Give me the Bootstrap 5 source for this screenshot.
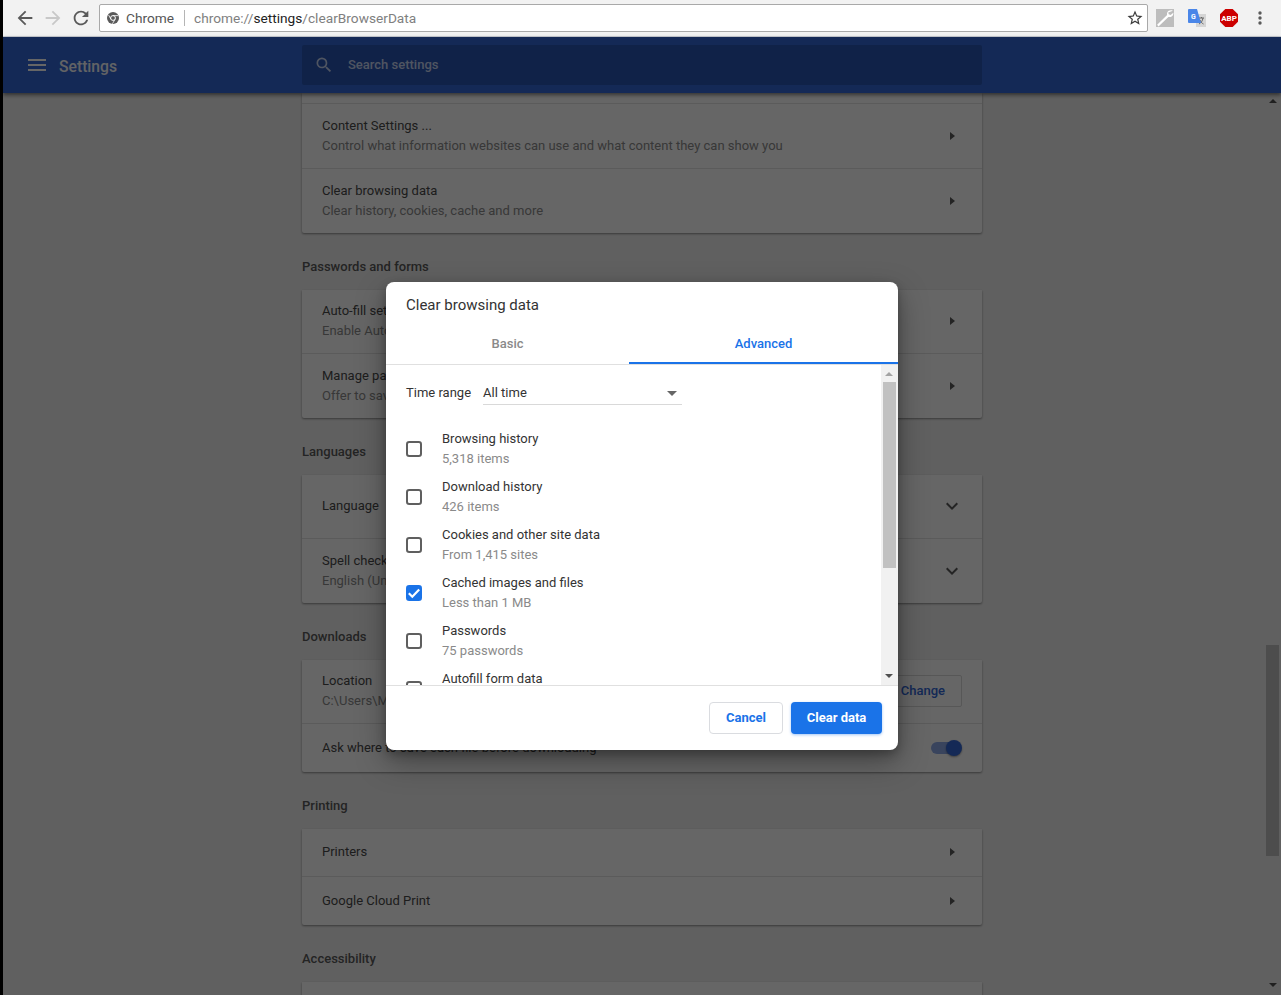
<!DOCTYPE html>
<html lang="en">
<head>
    <meta charset="UTF-8">
    <meta name="viewport" content="width=device-width, initial-scale=1.0">
    <title>Settings - Clear browsing data</title>
    <link href="https://cdn.jsdelivr.net/npm/bootstrap@5.3.0/dist/css/bootstrap.min.css" rel="stylesheet">
    <style>
        html, body { height: 995px; overflow: hidden; }
        body { position: relative; background: #000; font-family: Roboto, "Liberation Sans", sans-serif; font-size: 13px; color: #333; padding-left: 3px; }

        /* browser chrome */
        .browser-bar { height: 37px; background: #f2f2f2; border-bottom: 1px solid #c9cdd3; }
        .tool-btn { width: 22px; height: 22px; fill: #5a5a5a; flex: none; margin-right: 6px; }
        .omnibox { width: 1049px; height: 28px; background: #fff; border: 1px solid #a9a9a9; border-radius: 2px; margin-left: 1px; padding: 0 3px 0 7px; font-size: 13.7px; color: #808080; }
        .omni-site { color: #555; border-right: 1px solid #b5b5b5; height: 16px; line-height: 16px; padding-right: 9px; margin-right: 9px; width: 59px; }
        .omni-host { color: #222; }
        .ext-icon { width: 18px; height: 18px; flex: none; }

        /* settings page under the scrim */
        .settings-head { height: 56px; background: #3367d6; padding-left: 25px; box-shadow: 0 2px 4px rgba(0,0,0,.5); position: relative; z-index: 1; }
        .settings-title { color: #fff; font-size: 15.7px; font-weight: 500; margin-left: 13px; width: 243px; opacity: .95; padding-top: 4px; }
        .search-box { width: 680px; height: 40px; background: #2a56b5; border-radius: 2px; color: #c6d4f2; font-weight: 500; padding-left: 12px; }
        .search-box svg { width: 20px; height: 20px; fill: #c6d4f2; margin-right: 14px; }
        .settings-main { height: 902px; background: #f1f1f1; padding-left: 299px; overflow: hidden; position: relative; }
        .sect-title { font-weight: 500; color: #5a5a5a; height: 57px; padding-top: 26px; line-height: 16px; }
        .set-card { width: 680px; border: 0; border-radius: 0 0 2px 2px; box-shadow: 0 1px 2px rgba(0,0,0,.3), 0 1px 3px rgba(0,0,0,.15); }
        .set-row { height: 64px; padding: 0 20px; border-color: #e4e4e4; background: #fff; color: #4a4a4a; line-height: 20px; }
        .set-row:not(:last-child) { padding-bottom: 1px; }
        .set-row.row-h48 { height: 48px; }
        .set-row.row-h65 { height: 65px; padding-bottom: 0; }
        .set-row.set-stub { height: 11px; padding: 0; }
        .set-sub { color: #8c8c8c; }
        .set-arrow { width: 0; height: 0; border-left: 5px solid #5a5a5a; border-top: 4px solid transparent; border-bottom: 4px solid transparent; margin-right: 7px; }
        .set-chev { width: 24px; height: 24px; fill: #5a5a5a; margin-right: -2px; }
        .btn-change { border: 1px solid #d9d9d9; color: #3367d6; font-size: 13px; font-weight: 500; background: #fff; padding: 5px 16px 7px; height: 32px; border-radius: 2px; }
        .set-track { width: 26px; height: 12px; border-radius: 6px; background: #8eaae8; position: relative; margin-right: 5px; }
        .set-knob { position: absolute; right: -5px; top: -2px; width: 16px; height: 16px; border-radius: 50%; background: #3367d6; box-shadow: 0 1px 2px rgba(0,0,0,.4); }

        .page-bar { position: absolute; right: 0; top: 0; width: 16px; height: 100%; background: #f1f1f1; }
        .page-thumb { position: absolute; left: 1px; top: 552px; width: 13px; height: 211px; background: #c1c1c1; }
        .tri-up, .tri-down { position: absolute; left: 4px; width: 0; height: 0; border-left: 4px solid transparent; border-right: 4px solid transparent; }
        .tri-up { border-bottom: 4px solid #505050; }
        .tri-down { border-top: 4px solid #505050; }

        .scrim { position: absolute; left: 3px; right: 0; top: 37px; bottom: 0; background: rgba(0,0,0,.6); z-index: 5; }

        /* dialog */
        .clear-dialog { position: absolute; left: 386px; top: 282px; width: 512px; height: 468px; background: #fff; border-radius: 8px; box-shadow: 0 12px 30px rgba(0,0,0,.35), 0 4px 10px rgba(0,0,0,.25); z-index: 6; display: flex; flex-direction: column; overflow: hidden; }
        .dlg-title { font-size: 15px; color: #333; padding: 14px 20px 0; height: 47px; line-height: 18px; }
        .dlg-tabs { height: 36px; border-bottom: 1px solid #e0e0e0; flex-wrap: nowrap; }
        .dlg-tab { font-weight: 500; color: #8a8a8a; display: flex; align-items: center; justify-content: center; height: 35px; padding: 0 0 6px; }
        .dlg-tab.tab-basic { width: 243px; }
        .dlg-tab.tab-adv { width: 269px; color: #1a73e8; border-bottom: 2px solid #1a73e8; padding-bottom: 4px; }
        .dlg-body { height: 320px; position: relative; overflow: hidden; padding: 0 20px; }
        .dlg-range { height: 60px; padding-bottom: 4px; }
        .dlg-label { margin-right: 12px; }
        .dlg-select { width: 199px; height: 24px; border-bottom: 1px solid #d9d9d9; margin-bottom: 1px; padding: 2px 5px 0 0; }
        .dlg-caret { width: 0; height: 0; border-left: 5px solid transparent; border-right: 5px solid transparent; border-top: 5px solid #666; }
        .dlg-item { height: 48px; line-height: 20px; }
        .dlg-check { width: 16px; height: 16px; margin: 0 20px 0 0; flex: none; border: 2px solid #5f5f5f; border-radius: 2px; }
        .dlg-check:checked { background-color: #1a73e8; border: 0; background-size: 16px; background-image: url("data:image/svg+xml,%3csvg xmlns='http://www.w3.org/2000/svg' viewBox='0 0 16 16'%3e%3cpath fill='none' stroke='%23fff' stroke-width='2.2' d='M2.8 8.200 6.300 11.700 13.200 4.500'/%3e%3c/svg%3e"); }
        .dlg-sub { color: #8a8a8a; }
        .dlg-bar { position: absolute; right: 0; top: 0; width: 17px; height: 100%; background: #f1f1f1; }
        .dlg-thumb { position: absolute; left: 2px; top: 17px; width: 13px; height: 186px; background: #c1c1c1; }
        .dlg-foot { height: 65px; border-top: 1px solid #e0e0e0; padding: 16px; margin-top: auto; }
        .btn-cancel { width: 74px; height: 32px; padding: 0; font-size: 13px; font-weight: 700; color: #1a73e8; background: #fff; border: 1px solid #dadce0; border-radius: 4px; margin-right: 8px; }
        .btn-clear { width: 91px; height: 32px; padding: 0; font-size: 13px; font-weight: 700; color: #fff; background: #1a73e8; border: 0; border-radius: 4px; box-shadow: 0 1px 3px rgba(26,115,232,.4); }
    </style>
</head>
<body>

    <div class="browser-bar d-flex align-items-center">
        <svg class="tool-btn" style="margin-left:11px" viewBox="0 0 24 24"><path d="M20 11H7.830l5.590-5.590L12 4l-8 8 8 8 1.410-1.410L7.830 13H20v-2z"/></svg>
        <svg class="tool-btn" style="fill:#c8c8c8" viewBox="0 0 24 24"><path d="M4 11h12.170l-5.590-5.590L12 4l8 8-8 8-1.410-1.410L16.170 13H4v-2z"/></svg>
        <svg class="tool-btn" viewBox="0 0 24 24"><path d="M17.650 6.350A7.958 7.958 0 0 0 12 4c-4.420 0-7.990 3.580-7.990 8s3.570 8 7.990 8c3.730 0 6.840-2.550 7.730-6h-2.080A5.990 5.990 0 0 1 12 18c-3.310 0-6-2.690-6-6s2.690-6 6-6c1.660 0 3.140.69 4.220 1.780L13 11h7V4l-2.350 2.350z"/></svg>
        <div class="omnibox d-flex align-items-center">
            <svg width="12" height="12" viewBox="0 0 12 12" class="flex-shrink-0" style="margin-right:7px"><circle cx="6" cy="6" r="6" fill="#5a5a5a"/><circle cx="6" cy="6" r="2.400" fill="#5a5a5a" stroke="#fff" stroke-width="1"/><path d="M6 3.600h5M4 7.400 1.600 3M8 7.400 5.400 11.800" stroke="#fff" stroke-width=".8"/></svg>
            <span class="omni-site">Chrome</span>
            <span>chrome://<span class="omni-host">settings</span>/clearBrowserData</span>
            <svg class="ms-auto flex-shrink-0" width="18" height="18" viewBox="0 0 24 24" fill="#3c3c3c"><path d="M22 9.240l-7.190-.62L12 2 9.190 8.630 2 9.240l5.460 4.730L5.820 21 12 17.270 18.180 21l-1.630-7.030L22 9.240zM12 15.400l-3.760 2.270 1-4.280-3.320-2.880 4.380-.38L12 6.100l1.710 4.040 4.380.38-3.320 2.880 1 4.280L12 15.400z"/></svg>
        </div>
        <svg class="ext-icon" style="margin-left:8px" viewBox="0 0 16 16"><rect width="16" height="16" fill="#bdbdbd"/><path d="M15 1.500c-2-.9-4.300-.2-5 1.700-.3.8-.3 1.500-.1 2.200L1 14l1.200 1.500L11 7c1.800.5 3.600-.4 4.200-2 .2-.6.3-1.200.2-1.700L13 5.300 11.300 4.700 10.900 3z" fill="#fff"/></svg>
        <svg class="ext-icon" style="margin-left:14px" viewBox="0 0 18 18"><rect x="8" y="5" width="10" height="13" fill="#d5d5d5"/><path d="M11 9h5M13.500 8v1M15 9c-.5 3-2 5-4 6M12 11c.8 2 2 3.300 3.500 4" stroke="#666" stroke-width="1" fill="none"/><path d="M1 0h8l4 14H1a1 1 0 0 1-1-1V1a1 1 0 0 1 1-1z" fill="#4a86e8"/><text x="3" y="10" font-size="7" font-weight="700" fill="#fff" font-family="Roboto, sans-serif">G</text></svg>
        <svg class="ext-icon" style="margin-left:14px" viewBox="0 0 18 18"><path d="M5.300 0h7.400L18 5.300v7.400L12.700 18H5.300L0 12.700V5.300z" fill="#c00"/><text x="9" y="12" text-anchor="middle" font-size="8" font-weight="700" fill="#fff" font-family="Roboto, sans-serif">ABP</text></svg>
        <svg class="ext-icon" style="margin-left:13px" viewBox="0 0 18 18" fill="#5a5a5a"><circle cx="9" cy="4" r="1.700"/><circle cx="9" cy="9" r="1.700"/><circle cx="9" cy="14" r="1.700"/></svg>
    </div>

    <div class="settings-head d-flex align-items-center">
        <svg width="18" height="18" viewBox="0 0 18 18" fill="#fff"><rect y="3" width="18" height="2"/><rect y="8" width="18" height="2"/><rect y="13" width="18" height="2"/></svg>
        <div class="settings-title">Settings</div>
        <div class="search-box d-flex align-items-center">
            <svg viewBox="0 0 24 24"><path d="M15.500 14h-.79l-.28-.27A6.471 6.471 0 0 0 16 9.500 6.500 6.500 0 1 0 9.500 16c1.610 0 3.090-.59 4.230-1.570l.27.28v.79l5 4.990L20.490 19l-4.990-5zm-6 0C7.010 14 5 11.990 5 9.500S7.010 5 9.500 5 14 7.010 14 9.500 11.990 14 9.500 14z"/></svg>
            <span>Search settings</span>
        </div>
    </div>

    <div class="settings-main">
        <div class="card set-card">
            <div class="list-group list-group-flush">
                <div class="list-group-item set-row set-stub"></div>
                <div class="list-group-item set-row row-h65 d-flex align-items-center justify-content-between">
                    <div><div>Content Settings ...</div><div class="set-sub">Control what information websites can use and what content they can show you</div></div>
                    <span class="set-arrow"></span>
                </div>
                <div class="list-group-item set-row d-flex align-items-center justify-content-between">
                    <div><div>Clear browsing data</div><div class="set-sub">Clear history, cookies, cache and more</div></div>
                    <span class="set-arrow"></span>
                </div>
            </div>
        </div>

        <div class="sect-title">Passwords and forms</div>
        <div class="card set-card">
            <div class="list-group list-group-flush">
                <div class="list-group-item set-row d-flex align-items-center justify-content-between">
                    <div><div>Auto-fill settings</div><div class="set-sub">Enable Auto-fill to fill out web forms in a single click</div></div>
                    <span class="set-arrow"></span>
                </div>
                <div class="list-group-item set-row d-flex align-items-center justify-content-between">
                    <div><div>Manage passwords</div><div class="set-sub">Offer to save your web passwords</div></div>
                    <span class="set-arrow"></span>
                </div>
            </div>
        </div>

        <div class="sect-title">Languages</div>
        <div class="card set-card">
            <div class="list-group list-group-flush">
                <div class="list-group-item set-row d-flex align-items-center justify-content-between">
                    <div>Language</div>
                    <svg class="set-chev" viewBox="0 0 24 24"><path d="M16.590 8.590L12 13.170 7.410 8.590 6 10l6 6 6-6z"/></svg>
                </div>
                <div class="list-group-item set-row d-flex align-items-center justify-content-between">
                    <div><div>Spell check</div><div class="set-sub">English (United States)</div></div>
                    <svg class="set-chev" viewBox="0 0 24 24"><path d="M16.590 8.590L12 13.170 7.410 8.590 6 10l6 6 6-6z"/></svg>
                </div>
            </div>
        </div>

        <div class="sect-title">Downloads</div>
        <div class="card set-card">
            <div class="list-group list-group-flush">
                <div class="list-group-item set-row d-flex align-items-center justify-content-between">
                    <div><div>Location</div><div class="set-sub">C:\Users\Me\Downloads</div></div>
                    <button class="btn btn-change">Change</button>
                </div>
                <div class="list-group-item set-row row-h48 d-flex align-items-center justify-content-between">
                    <div>Ask where to save each file before downloading</div>
                    <span class="set-track"><span class="set-knob"></span></span>
                </div>
            </div>
        </div>

        <div class="sect-title">Printing</div>
        <div class="card set-card">
            <div class="list-group list-group-flush">
                <div class="list-group-item set-row row-h48 d-flex align-items-center justify-content-between">
                    <div>Printers</div>
                    <span class="set-arrow"></span>
                </div>
                <div class="list-group-item set-row row-h48 d-flex align-items-center justify-content-between">
                    <div>Google Cloud Print</div>
                    <span class="set-arrow"></span>
                </div>
            </div>
        </div>

        <div class="sect-title">Accessibility</div>
        <div class="card set-card">
            <div class="list-group list-group-flush">
                <div class="list-group-item set-row"></div>
            </div>
        </div>

        <div class="page-bar">
            <span class="tri-up" style="top:6px"></span>
            <div class="page-thumb"></div>
            <span class="tri-down" style="top:890px"></span>
        </div>
    </div>

    <div class="scrim"></div>

    <div class="clear-dialog">
        <div class="dlg-title">Clear browsing data</div>
        <div class="nav dlg-tabs">
            <div class="dlg-tab tab-basic">Basic</div>
            <div class="dlg-tab tab-adv">Advanced</div>
        </div>
        <div class="dlg-body">
            <div class="dlg-range d-flex align-items-center">
                <span class="dlg-label">Time range</span>
                <div class="dlg-select d-flex align-items-center justify-content-between">
                    <span>All time</span><span class="dlg-caret"></span>
                </div>
            </div>
            <label class="dlg-item d-flex align-items-center">
                <input class="form-check-input dlg-check" type="checkbox">
                <span><span class="d-block">Browsing history</span><span class="d-block dlg-sub">5,318 items</span></span>
            </label>
            <label class="dlg-item d-flex align-items-center">
                <input class="form-check-input dlg-check" type="checkbox">
                <span><span class="d-block">Download history</span><span class="d-block dlg-sub">426 items</span></span>
            </label>
            <label class="dlg-item d-flex align-items-center">
                <input class="form-check-input dlg-check" type="checkbox">
                <span><span class="d-block">Cookies and other site data</span><span class="d-block dlg-sub">From 1,415 sites</span></span>
            </label>
            <label class="dlg-item d-flex align-items-center">
                <input class="form-check-input dlg-check" type="checkbox" checked>
                <span><span class="d-block">Cached images and files</span><span class="d-block dlg-sub">Less than 1 MB</span></span>
            </label>
            <label class="dlg-item d-flex align-items-center">
                <input class="form-check-input dlg-check" type="checkbox">
                <span><span class="d-block">Passwords</span><span class="d-block dlg-sub">75 passwords</span></span>
            </label>
            <label class="dlg-item d-flex align-items-center">
                <input class="form-check-input dlg-check" type="checkbox">
                <span><span class="d-block">Autofill form data</span><span class="d-block dlg-sub">1 address</span></span>
            </label>
            <div class="dlg-bar">
                <span class="tri-up" style="top:7px;border-bottom-color:#a3a3a3"></span>
                <div class="dlg-thumb"></div>
                <span class="tri-down" style="top:309px"></span>
            </div>
        </div>
        <div class="dlg-foot d-flex justify-content-end">
            <button class="btn btn-cancel">Cancel</button>
            <button class="btn btn-clear">Clear data</button>
        </div>
    </div>

    <script src="https://cdn.jsdelivr.net/npm/bootstrap@5.3.0/dist/js/bootstrap.bundle.min.js"></script>
</body>
</html>
